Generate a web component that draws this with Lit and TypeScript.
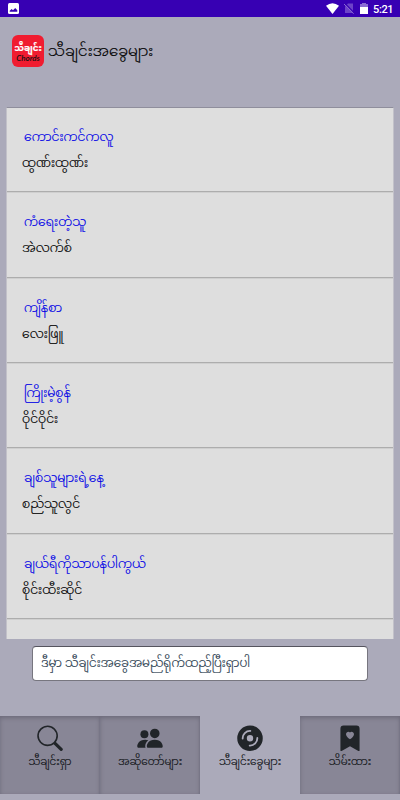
import { LitElement, html, svg, css } from "lit";
import { customElement } from "lit/decorators.js";

const songs = [
  ["ကောင်းကင်ကလူ", "ထွဏ်းထွဏ်း"],
  ["ကံရေးတဲ့သူ", "အဲလက်စ်"],
  ["ကျိန်စာ", "လေးဖြူ"],
  ["ကြိုးမဲ့စွန်", "ဝိုင်ဝိုင်း"],
  ["ချစ်သူများရဲ့နေ့", "စည်သူလွင်"],
  ["ချယ်ရီကိုသာပန်ပါကွယ်", "စိုင်းထီးဆိုင်"],
  ["", ""],
];

const icons = {
  search: svg`<path d="M11.742 10.344a6.5 6.5 0 1 0-1.397 1.398h-.001c.03.04.062.078.098.115l3.85 3.85a1 1 0 0 0 1.415-1.414l-3.85-3.85a1.007 1.007 0 0 0-.115-.1zM12 6.5a5.5 5.5 0 1 1-11 0 5.5 5.5 0 0 1 11 0z"/>`,
  people: svg`<path d="M7 14s-1 0-1-1 1-4 5-4 5 3 5 4-1 1-1 1H7zm4-6a3 3 0 1 0 0-6 3 3 0 0 0 0 6z"/><path fill-rule="evenodd" d="M5.216 14A2.238 2.238 0 0 1 5 13c0-1.355.68-2.75 1.936-3.72A6.325 6.325 0 0 0 5 9c-4 0-5 3-5 4s1 1 1 1h4.216z"/><path d="M4.5 8a2.5 2.5 0 1 0 0-5 2.5 2.5 0 0 0 0 5z"/>`,
  disc: svg`<path d="M16 8A8 8 0 1 1 0 8a8 8 0 0 1 16 0zm-6 0a2 2 0 1 0-4 0 2 2 0 0 0 4 0z"/><path d="M3.4 8.2A4.6 4.6 0 0 1 8.2 3.4M12.6 7.8A4.6 4.6 0 0 1 7.8 12.6" fill="none" stroke="#abaaba" stroke-width="1.15" stroke-linecap="round"/>`,
  bookmark: svg`<path d="M2 15.5a.5.5 0 0 0 .74.439L8 13.069l5.26 2.87A.5.5 0 0 0 14 15.5V2a2 2 0 0 0-2-2H4a2 2 0 0 0-2 2v13.5zM8 4.41c1.387-1.425 4.854 1.07 0 4.277C3.146 5.48 6.613 2.986 8 4.412z"/>`,
};

const tabs = [
  { icon: icons.search, label: "သီချင်းရှာ" },
  { icon: icons.people, label: "အဆိုတော်များ" },
  { icon: icons.disc, label: "သီချင်းခွေများ", active: true },
  { icon: icons.bookmark, label: "သိမ်းထား" },
];

@customElement("app-root")
export class AppRoot extends LitElement {
  static styles = css`
    :host { display: flex; flex-direction: column; height: 800px; width: 400px; overflow: hidden;
      background: #abaaba; color: #000; box-sizing: border-box; font-weight: 300; -webkit-text-stroke: 0.2px currentColor;
      font-family: Roboto, "Noto Sans Myanmar", "Noto Sans", sans-serif; }
    * { box-sizing: border-box; }
    .status { height: 17px; flex: none; background: #3700b3; display: flex; align-items: center; padding: 0 7px 0 8px; color: #fff; -webkit-text-stroke: 0; }
    .status svg { display: block; flex: none; }
    .grow { flex: 1; }
    .wifi { margin-right: 5px; }
    .sim { margin-right: 6px; }
    .batt { margin-right: 5px; }
    .time { font: 500 11px/17px Roboto, sans-serif; width: 20px; white-space: nowrap; letter-spacing: -0.35px; padding-top: 1px; }
    header { height: 90px; flex: none; padding: 18px 12px 0; display: flex; align-items: flex-start; gap: 4px; }
    .logo { width: 32px; height: 32px; border-radius: 6px; background: #f01c30; text-align: center; padding-top: 6px; white-space: nowrap; -webkit-text-stroke: 0; }
    .logo b { display: block; font-size: 8.7px; font-weight: 700; line-height: 14px; color: #fff; -webkit-text-stroke: 0.2px #fff; margin: 0 -2px; }
    .logo i { display: block; font: italic 600 8px/7px Lato, sans-serif; color: #111; }
    h1 { margin: 0; font-size: 15px; font-weight: 300; line-height: 32px; white-space: nowrap; }
    .list { margin: 0 6px; height: 532px; flex: none; overflow: hidden; background: #dedede; border-top: 1px solid #8f8e9c; border-left: 1px solid #c2c1c9; border-right: 1px solid #c2c1c9; }
    .row { height: 85.4px; padding: 17px 15px 0; border-bottom: 1px solid #adadad; box-shadow: 0 1px 0 #cfcfcf; white-space: nowrap; }
    .row:first-child { height: 84.2px; padding-top: 16px; }
    .title, .artist { width: max-content; font-size: 13px; line-height: 26px; height: 26px; transform: scaleX(.96); transform-origin: 0 0; }
    .title { margin-left: 2px; color: #0000e6; }
    .artist { margin-left: -0.5px; }
    .field { margin: 7px 32px 0; height: 35px; flex: none; background: #fff; border: 1px solid #77767f; border-top-color: #55545e; border-radius: 4px; padding: 0 8px; font-size: 12px; line-height: 32px; color: #2c3e50; white-space: nowrap; overflow: hidden; }
    nav { margin-top: 35px; height: 78px; flex: none; display: grid; grid-template-columns: 100px 100px 100px 100px; }
    .tab { display: flex; flex-direction: column; align-items: center; padding-top: 9px; background: #888696; box-shadow: inset 0 2px 4px #6d6b7a, inset -1px 0 1px #807e8e; color: #111417; }
    .tab svg { width: 26px; height: 26px; fill: #212529; flex: none; }
    .tab span { font-size: 10.5px; line-height: 22px; white-space: nowrap; }
    .active { background: none; box-shadow: none; }
  `;

  render() {
    return html`
      <div class="status">
        <svg width="11" height="11" viewBox="0 0 11 11"><rect width="11" height="11" rx="1.5" fill="#fff"/><path d="M1.7 8.7V7.8L3.7 6 5 7.3 7.2 5 9.3 7.3V8.7Z" fill="#3700b3"/></svg>
        <div class="grow"></div>
        <svg class="wifi" width="13" height="11" viewBox="0 0 13 11"><path d="M0 2.8Q6.5-2.4 13 2.8L6.5 11Z" fill="#fff"/></svg>
        <svg class="sim" width="10" height="11" viewBox="0 0 10 11"><path d="M4 .5H9V10H1V3.5Z" fill="#6d43c8"/><path d="M.8 .2 10.4 10" stroke="#3700b3" stroke-width="1.2"/><path d="M0 1 9.6 10.8" stroke="#8b6bd4"/></svg>
        <svg class="batt" width="8" height="11" viewBox="0 0 8 11"><path d="M0 1H2V0H6V1H8V4H0Z" fill="#8b6bd4"/><path d="M0 4H8V11H0Z" fill="#fff"/></svg>
        <span class="time">5:21</span>
      </div>
      <header>
        <div class="logo"><b>သီချင်း</b><i>Chords</i></div>
        <h1>သီချင်းအခွေများ</h1>
      </header>
      <div class="list">
        ${songs.map(([title, artist]) => html`<div class="row"><div class="title">${title}</div><div class="artist">${artist}</div></div>`)}
      </div>
      <div class="field">ဒီမှာ သီချင်းအခွေအမည်ရိုက်ထည့်ပြီးရှာပါ</div>
      <nav>
        ${tabs.map((t) => html`<div class="tab ${t.active ? "active" : ""}"><svg viewBox="-.15 -.3 16.3 16.3">${t.icon}</svg><span>${t.label}</span></div>`)}
      </nav>
    `;
  }
}
